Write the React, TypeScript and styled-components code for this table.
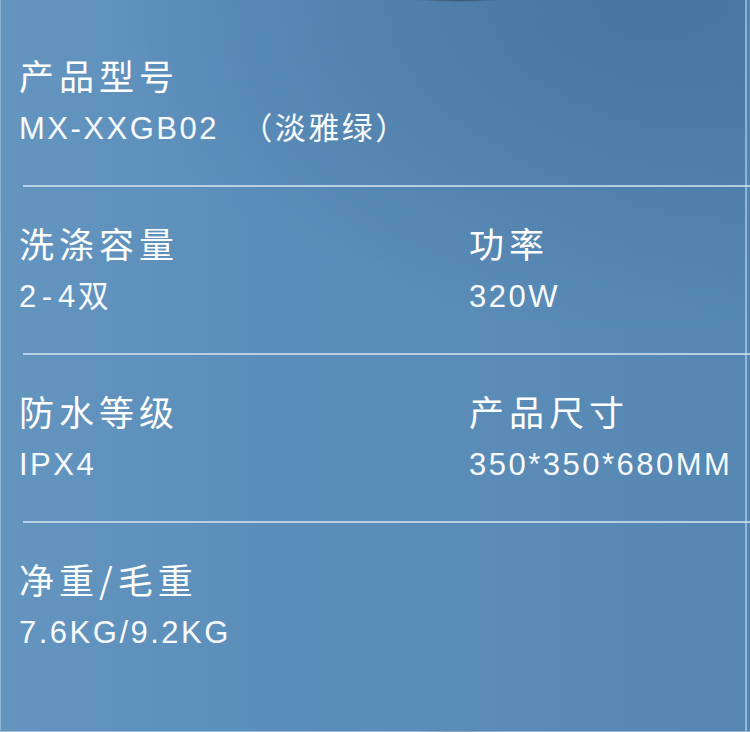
import React from 'react'
import styled, { createGlobalStyle } from 'styled-components'

interface Spec {
    label: string
    value: React.ReactNode
}

const App: React.FC = () => {
    return (
        <>
            <GlobalStyle />
            <StyledPage>
                {rows.map((row, i) => (
                    <React.Fragment key={i}>
                        {i > 0 && <StyledDivider />}
                        <StyledRow>
                            {row.map((spec) => (
                                <StyledCell key={spec.label}>
                                    <StyledLabel>{spec.label}</StyledLabel>
                                    <StyledValue>{spec.value}</StyledValue>
                                </StyledCell>
                            ))}
                        </StyledRow>
                    </React.Fragment>
                ))}
            </StyledPage>
        </>
    )
}

const GlobalStyle = createGlobalStyle`
    html, body {
        margin: 0;
        padding: 0;
        background: #5a8cb7;
    }
`

const StyledPage = styled.div`
    box-sizing: border-box;
    width: 750px;
    height: 732px;
    padding-top: 19px;
    overflow: hidden;
    border-left: 1px solid rgba(190, 215, 235, 0.6);
    border-bottom: 1px solid rgba(190, 215, 235, 0.6);
    box-shadow: inset -3px 0 0 #5384ae, inset -5px 0 0 rgba(200, 222, 240, 0.55);
    background:
        radial-gradient(ellipse 45px 2px at 61% 0, rgba(30, 45, 60, 0.55), rgba(30, 45, 60, 0)),
        radial-gradient(ellipse 70% 45% at 85% 0%, rgba(55, 95, 140, 0.5), rgba(55, 95, 140, 0)),
        linear-gradient(90deg, #6395bf 0%, #5c8ebb 35%, #5a8cb7 65%, #5587b2 100%);
    color: #ffffff;
`

const StyledRow = styled.div`
    display: grid;
    grid-template-columns: 450px 1fr;
    padding: 36px 0 39px 18px;
`

const StyledCell = styled.div`
    display: flex;
    flex-direction: column;
    gap: 17px;
`

const StyledLabel = styled.span`
    display: block;
    font-family: "Noto Sans CJK SC", "Noto Sans", sans-serif;
    font-size: 35px;
    line-height: 40px;
    letter-spacing: 5px;
    white-space: nowrap;
`

const StyledValue = styled.span`
    display: block;
    font-family: "Liberation Sans", "Noto Sans CJK SC", sans-serif;
    font-size: 31px;
    line-height: 34px;
    letter-spacing: 2.5px;
    white-space: pre;
    color: #f7fafd;
`

const StyledDash = styled.span`
    margin: 0 3.5px 0 3px;
`

const StyledDivider = styled.div`
    height: 2px;
    margin-left: 22px;
    background: rgba(215, 230, 242, 0.75);
`

const rows: Spec[][] = [
    [{ label: '产品型号', value: 'MX-XXGB02  （淡雅绿）' }],
    [
        {
            label: '洗涤容量',
            value: (
                <>
                    2<StyledDash>-</StyledDash>4双
                </>
            ),
        },
        { label: '功率', value: '320W' },
    ],
    [
        { label: '防水等级', value: 'IPX4' },
        { label: '产品尺寸', value: '350*350*680MM' },
    ],
    [{ label: '净重/毛重', value: '7.6KG/9.2KG' }],
]

export default App
